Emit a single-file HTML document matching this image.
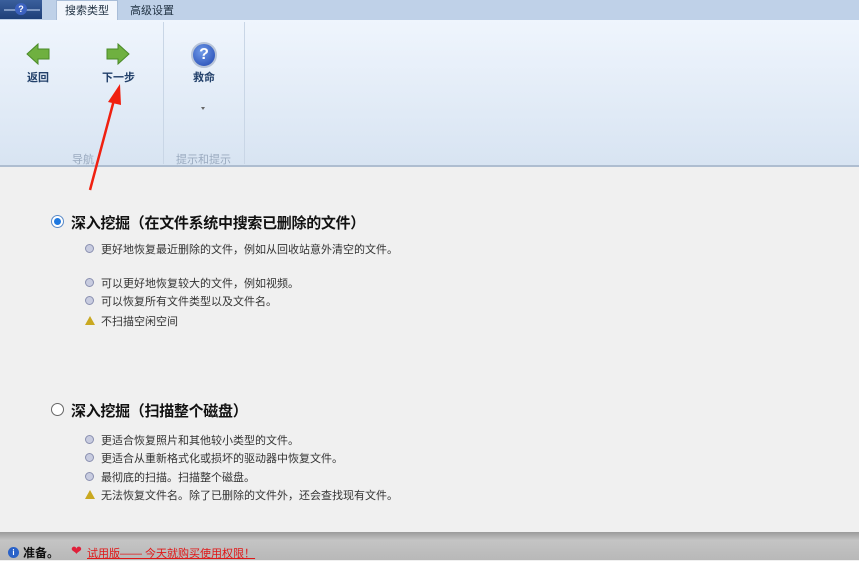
<!DOCTYPE html>
<html><head><meta charset="utf-8"><style>
*{margin:0;padding:0;box-sizing:border-box}
body{width:859px;height:560px;overflow:hidden;background:#f0f0f0;font-family:"Liberation Sans","Noto Sans CJK SC",sans-serif;position:relative}
.a{position:absolute}
.t{font-size:11px;color:#333;white-space:nowrap}
.h{font-size:15px;font-weight:bold;color:#111;white-space:nowrap;letter-spacing:-0.3px}
.b{width:9px;height:9px;border-radius:50%;background:#c8cce0;border:1px solid #8a90b0}
.w{width:0;height:0;border-left:5px solid transparent;border-right:5px solid transparent;border-bottom:9px solid #c9a820}
.lbl{font-size:11px;color:#22406a;font-weight:bold}
.g{font-size:11px;color:#9aaabf}
</style></head><body>
<div class="a" style="left:0;top:0;width:859px;height:20px;background:#bfd1e8"></div>
<div class="a" style="left:0;top:0;width:42px;height:19px;background:linear-gradient(#3a5f9c,#1e3f78)"></div>
<div class="a" style="left:4px;top:9px;width:36px;height:2px;background:#7d97c2"></div>
<div class="a" style="left:15px;top:3px;width:12px;height:12px;border-radius:50%;background:#3c62c0;color:#fff;font-size:9px;text-align:center;line-height:12px;font-weight:bold">?</div>
<div class="a" style="left:56px;top:0;width:62px;height:21px;background:#f2f6fc;border:1px solid #a9bdd8;border-bottom:none"></div>
<div class="a t" style="left:65px;top:2px;color:#234">搜索类型</div>
<div class="a t" style="left:130px;top:2px;color:#234">高级设置</div>
<div class="a" style="left:0;top:20px;width:859px;height:145px;background:linear-gradient(#eff5fd,#d8e4f2)"></div>
<div class="a" style="left:0;top:165px;width:859px;height:2px;background:#aebdd0"></div>
<div class="a" style="left:163px;top:22px;width:1px;height:142px;background:#c9d6e6"></div>
<div class="a" style="left:244px;top:22px;width:1px;height:142px;background:#c9d6e6"></div>
<svg class="a" style="left:26px;top:43px" width="24" height="22"><path d="M1 11 L12 1 L12 6 L23 6 L23 16 L12 16 L12 21 Z" fill="#6fb040" stroke="#4a8a28"/></svg>
<svg class="a" style="left:106px;top:43px" width="24" height="22"><path d="M23 11 L12 1 L12 6 L1 6 L1 16 L12 16 L12 21 Z" fill="#6fb040" stroke="#4a8a28"/></svg>
<div class="a lbl" style="left:27px;top:69px">返回</div>
<div class="a lbl" style="left:102px;top:69px">下一步</div>
<div class="a" style="left:191px;top:42px;width:26px;height:26px;border-radius:50%;background:radial-gradient(circle at 40% 35%,#6f9ae8,#1f44b0);border:2px solid #b8c4d8;color:#fff;font-weight:bold;font-size:16px;text-align:center;line-height:22px">?</div>
<div class="a lbl" style="left:193px;top:69px">救命</div>
<div class="a" style="left:201px;top:107px;border-left:2px solid transparent;border-right:2px solid transparent;border-top:3px solid #666"></div>
<div class="a g" style="left:72px;top:151px">导航</div>
<div class="a g" style="left:176px;top:151px">提示和提示</div>
<svg class="a" style="left:0;top:0" width="859" height="200"><line x1="90" y1="190" x2="114" y2="100" stroke="#f02010" stroke-width="2.5"/><path d="M120 84 L108 102 L121 105 Z" fill="#f02010"/></svg>
<div class="a" style="left:51px;top:215px;width:13px;height:13px;border-radius:50%;border:1px solid #5a8ac8;background:#fff"><div style="margin:2px;width:7px;height:7px;border-radius:50%;background:#1e78e0"></div></div>
<div class="a h" style="left:71px;top:212px">深入挖掘（在文件系统中搜索已删除的文件）</div>
<div class="a b" style="left:85px;top:244px"></div><div class="a t" style="left:101px;top:241px">更好地恢复最近删除的文件，例如从回收站意外清空的文件。</div>
<div class="a b" style="left:85px;top:278px"></div><div class="a t" style="left:101px;top:275px">可以更好地恢复较大的文件，例如视频。</div>
<div class="a b" style="left:85px;top:296px"></div><div class="a t" style="left:101px;top:293px">可以恢复所有文件类型以及文件名。</div>
<div class="a w" style="left:85px;top:316px"></div><div class="a t" style="left:101px;top:313px">不扫描空闲空间</div>
<div class="a" style="left:51px;top:403px;width:13px;height:13px;border-radius:50%;border:1px solid #666;background:#fff"></div>
<div class="a h" style="left:71px;top:400px">深入挖掘（扫描整个磁盘）</div>
<div class="a b" style="left:85px;top:435px"></div><div class="a t" style="left:101px;top:432px">更适合恢复照片和其他较小类型的文件。</div>
<div class="a b" style="left:85px;top:453px"></div><div class="a t" style="left:101px;top:450px">更适合从重新格式化或损坏的驱动器中恢复文件。</div>
<div class="a b" style="left:85px;top:472px"></div><div class="a t" style="left:101px;top:469px">最彻底的扫描。扫描整个磁盘。</div>
<div class="a w" style="left:85px;top:490px"></div><div class="a t" style="left:101px;top:487px">无法恢复文件名。除了已删除的文件外，还会查找现有文件。</div>
<div class="a" style="left:0;top:532px;width:859px;height:28px;background:linear-gradient(#9a9a9a,#c4c4c4 30%,#b8b8b8)"></div>
<div class="a" style="left:8px;top:547px;width:11px;height:11px;border-radius:50%;background:#2a62c8;color:#fff;font-size:8px;text-align:center;line-height:11px;font-weight:bold">i</div>
<div class="a" style="left:23px;top:544px;font-size:12px;font-weight:bold;color:#111">准备。</div>
<div class="a" style="left:71px;top:543px;color:#e0203a;font-size:13px">❤</div>
<div class="a" style="left:87px;top:545px;font-size:11px;color:#e01818;text-decoration:underline;white-space:nowrap">试用版—— 今天就购买使用权限！</div>
</body></html>
